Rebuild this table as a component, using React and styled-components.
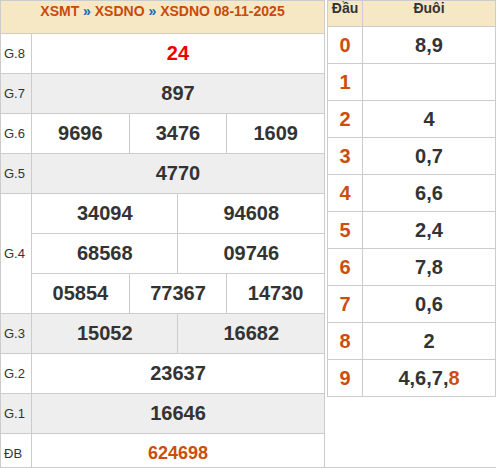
import React from "react";
import styled, { createGlobalStyle } from "styled-components";

const Global = createGlobalStyle`
  html, body { margin: 0; padding: 0; background: #fff; }
  body { font-family: "Liberation Sans", Arial, sans-serif; }
`;

const Wrapper = styled.div`
  width: 496px;
  height: 468px;
  box-sizing: border-box;
  border-bottom: 1px solid #ccc;
  overflow: hidden;
  display: flex;
  gap: 2px;
  align-items: flex-start;
`;

const LeftGrid = styled.div`
  width: 325px;
  flex: none;
  box-sizing: border-box;
  display: grid;
  grid-template-columns: 30px repeat(6, 1fr);
  grid-template-rows: 32px repeat(11, 39px);
  gap: 1px;
  padding: 1px;
  background: #ccc;
`;

const Title = styled.div`
  grid-column: 1 / -1;
  background: #f6e8c4;
  text-align: center;
  font-weight: bold;
  font-size: 14px;
  line-height: 16px;
  padding-top: 2px;
  color: #c94a0b;
`;

const Sep = styled.span`
  color: #1565c0;
`;

const Label = styled.div`
  grid-column: 1;
  grid-row: span ${(p) => p.$rows || 1};
  background: ${(p) => (p.$shade ? "#eeeeee" : "#fff")};
  display: flex;
  align-items: center;
  padding-left: 3px;
  font-size: 13px;
  color: #333;
`;

const Num = styled.div`
  grid-column: span ${(p) => p.$span};
  background: ${(p) => (p.$shade ? "#eeeeee" : "#fff")};
  display: flex;
  align-items: center;
  justify-content: center;
  font-weight: bold;
  font-size: ${(p) => (p.$tone === "special" ? "18px" : "20px")};
  color: ${(p) =>
    p.$tone === "red" ? "#ee0000" : p.$tone === "special" ? "#cc4e0c" : "#333"};
  padding-bottom: 1px;
`;

const RightGrid = styled.div`
  width: 169px;
  flex: none;
  box-sizing: border-box;
  display: grid;
  grid-template-columns: 34px 132px;
  grid-template-rows: 25px repeat(10, 36px);
  gap: 1px;
  padding: 1px;
  background: #ccc;
`;

const HeadCell = styled.div`
  background: #f6e8c4;
  text-align: center;
  font-weight: bold;
  font-size: 14px;
  line-height: 14px;
  color: #333;
`;

const Cell = styled.div`
  background: #fff;
  display: flex;
  align-items: center;
  justify-content: center;
  font-weight: bold;
  font-size: 20px;
  color: ${(p) => (p.$orange ? "#cc4e0c" : "#333")};
`;

const Hi = styled.span`
  color: #cc4e0c;
`;

const rows = [
  { label: "G.8", groups: [["24"]], tone: "red" },
  { label: "G.7", groups: [["897"]], shade: true },
  { label: "G.6", groups: [["9696", "3476", "1609"]] },
  { label: "G.5", groups: [["4770"]], shade: true },
  {
    label: "G.4",
    groups: [
      ["34094", "94608"],
      ["68568", "09746"],
      ["05854", "77367", "14730"],
    ],
  },
  { label: "G.3", groups: [["15052", "16682"]], shade: true },
  { label: "G.2", groups: [["23637"]] },
  { label: "G.1", groups: [["16646"]], shade: true },
  { label: "ĐB", groups: [["624698"]], tone: "special" },
];

const loto = [
  ["0", "8,9"],
  ["1", ""],
  ["2", "4"],
  ["3", "0,7"],
  ["4", "6,6"],
  ["5", "2,4"],
  ["6", "7,8"],
  ["7", "0,6"],
  ["8", "2"],
  ["9", null],
];

export default function App() {
  return (
    <>
      <Global />
      <Wrapper>
        <LeftGrid>
          <Title>
            XSMT <Sep>»</Sep> XSDNO <Sep>»</Sep> XSDNO 08-11-2025
          </Title>
          {rows.map((r) => (
            <React.Fragment key={r.label}>
              <Label $rows={r.groups.length} $shade={r.shade}>
                {r.label}
              </Label>
              {r.groups.map((g, gi) =>
                g.map((n, ni) => (
                  <Num
                    key={`${gi}-${ni}`}
                    $span={6 / g.length}
                    $shade={r.shade}
                    $tone={r.tone}
                  >
                    {n}
                  </Num>
                ))
              )}
            </React.Fragment>
          ))}
        </LeftGrid>
        <RightGrid>
          <HeadCell>Đầu</HeadCell>
          <HeadCell>Đuôi</HeadCell>
          {loto.map(([d, t]) => (
            <React.Fragment key={d}>
              <Cell $orange>{d}</Cell>
              <Cell>
                {t === null ? (
                  <>
                    4,6,7,<Hi>8</Hi>
                  </>
                ) : (
                  t
                )}
              </Cell>
            </React.Fragment>
          ))}
        </RightGrid>
      </Wrapper>
    </>
  );
}
